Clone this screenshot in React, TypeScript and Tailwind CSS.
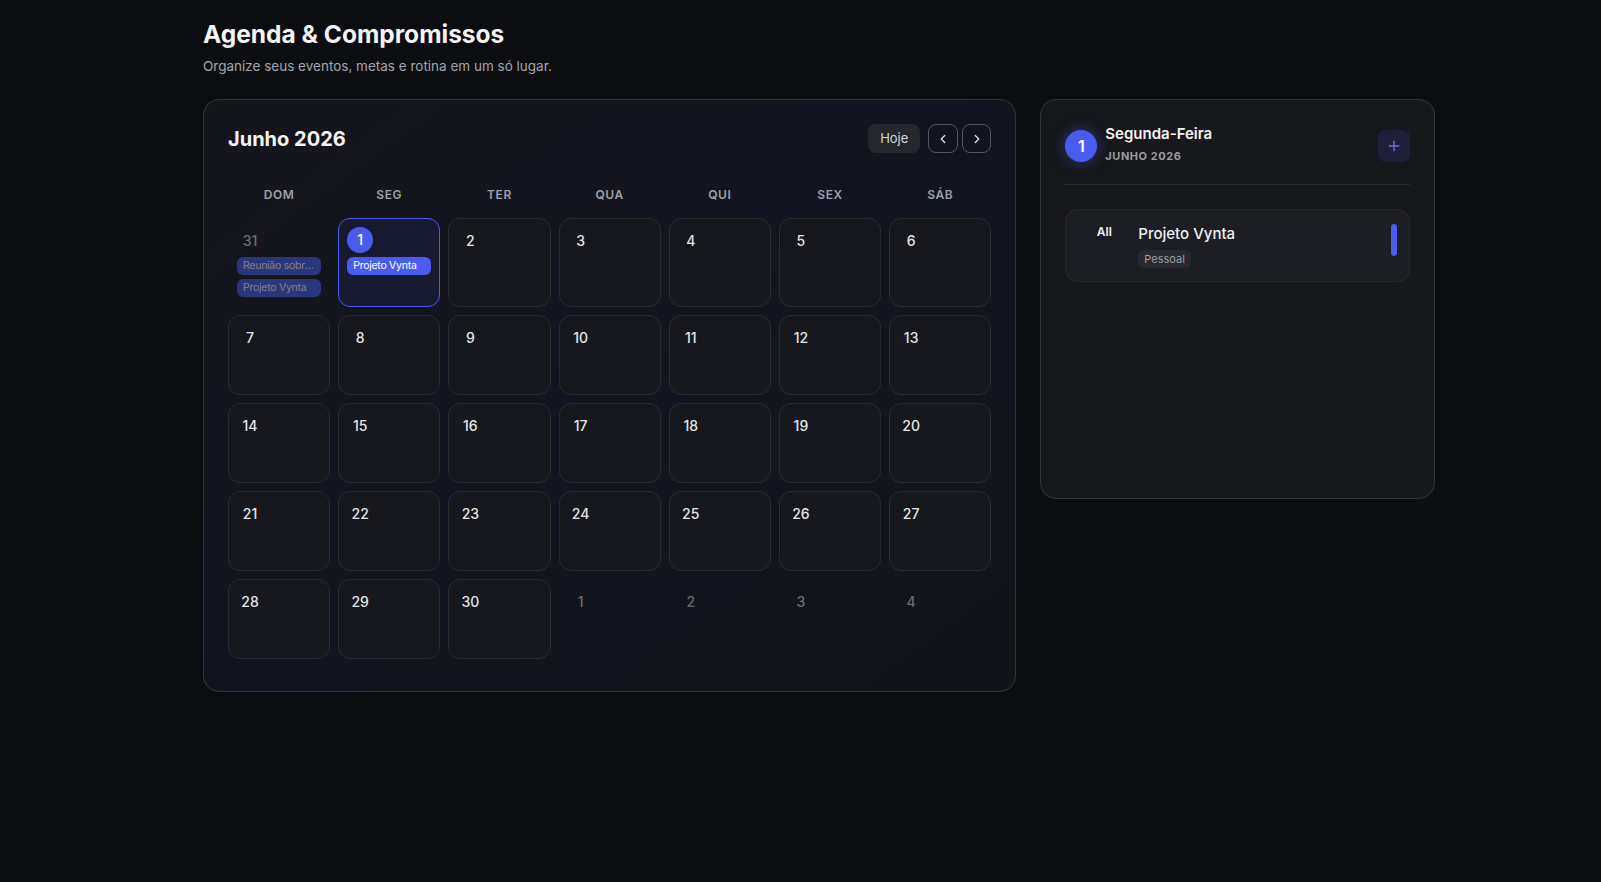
import { ChevronLeft, ChevronRight, Plus } from 'lucide-react';

type Day = { n: number; muted?: boolean; today?: boolean; events?: string[] };

const WEEKDAYS = ['DOM', 'SEG', 'TER', 'QUA', 'QUI', 'SEX', 'SÁB'];

// June 2026 starts on a Monday; pad with the tail of May and head of July
const DAYS: Day[] = [
  { n: 31, muted: true, events: ['Reunião sobre o lançamento', 'Projeto Vynta'] },
  { n: 1, today: true, events: ['Projeto Vynta'] },
  ...Array.from({ length: 29 }, (_, i) => ({ n: i + 2 })),
  { n: 1, muted: true },
  { n: 2, muted: true },
  { n: 3, muted: true },
  { n: 4, muted: true },
];

function EventPills({ events, className = 'mt-1' }: { events: string[]; className?: string }) {
  return (
    <div className={`flex flex-col gap-1 ${className}`}>
      {events.map((e, i) => (
        <div
          key={i}
          className="h-[18px] truncate rounded-md bg-[#4a5cf0] px-1.5 text-[10.5px] leading-[18px] tracking-tight text-white"
        >
          {e}
        </div>
      ))}
    </div>
  );
}

function DayCell({ d }: { d: Day }) {
  if (d.muted) {
    return (
      <div className="min-h-[80px] px-[9px] pb-[10px] pt-2 opacity-45">
        <div className="mt-0.5 flex h-[26px] w-[26px] items-center justify-center text-sm font-medium text-[#d4d5d9]">
          {d.n}
        </div>
        {d.events && <EventPills events={d.events} className="mt-[3px]" />}
      </div>
    );
  }

  return (
    <div
      className={`min-h-[80px] rounded-xl border p-2 ${
        d.today ? 'border-[#4c5be6] bg-[#171a31]' : 'border-[#2a2b31] bg-[#17181d]'
      }`}
    >
      <div
        className={`flex h-[26px] w-[26px] items-center justify-center rounded-full text-sm font-medium ${
          d.today ? 'bg-[#4a5cf0] text-white' : 'mt-px text-[#e4e5e8]'
        }`}
      >
        {d.n}
      </div>
      {d.events && <EventPills events={d.events} />}
    </div>
  );
}

export default function App() {
  return (
    <div
      className="min-h-screen bg-[#0c0d11] pl-[203px] pt-[18px] text-white"
      style={{ fontFamily: 'Inter, "Noto Sans", sans-serif' }}
    >
      <div className="w-[1232px]">
        <h1 className="text-[24.5px] font-bold leading-8 text-[#f4f4f6]">Agenda &amp; Compromissos</h1>
        <p className="mt-[6px] text-[13.5px] leading-5 text-[#a3a6ad]">
          Organize seus eventos, metas e rotina em um só lugar.
        </p>

        <div className="mt-[23px] grid grid-cols-3 items-start gap-6">
          {/* calendar */}
          <section className="col-span-2 rounded-2xl border border-[#34353b] bg-gradient-to-br from-[#15161c] via-[#121420] to-[#13141a] px-6 pb-8 pt-6">
            <div className="flex items-center justify-between">
              <h2 className="text-xl font-bold text-[#f4f4f6]">Junho 2026</h2>
              <div className="flex items-center gap-2">
                <button className="h-[29px] rounded-lg bg-[#25272d] px-3 text-[13px] text-[#d3d5da]">Hoje</button>
                <div className="flex gap-1">
                  <button className="flex h-[29px] w-[30px] items-center justify-center rounded-lg border border-[#56575e] text-[#e0e1e5]">
                    <ChevronLeft size={14} strokeWidth={2.25} />
                  </button>
                  <button className="flex h-[29px] w-[29px] items-center justify-center rounded-lg border border-[#56575e] text-[#e0e1e5]">
                    <ChevronRight size={14} strokeWidth={2.25} />
                  </button>
                </div>
              </div>
            </div>

            <div className="mb-[15px] mt-[34px] grid grid-cols-7 gap-2">
              {WEEKDAYS.map((w) => (
                <div key={w} className="text-center text-xs font-semibold leading-4 tracking-wider text-[#9ea1a8]">
                  {w}
                </div>
              ))}
            </div>

            <div className="grid grid-cols-7 gap-2">
              {DAYS.map((d, i) => (
                <DayCell key={i} d={d} />
              ))}
            </div>
          </section>

          {/* selected day */}
          <aside className="min-h-[400px] rounded-2xl border border-[#34353b] bg-[#17181c] px-6 pt-[23px]">
            <div className="flex items-start justify-between border-b border-[#2a2b30] pb-5">
              <div className="flex items-start gap-2">
                <div className="mt-[7px] flex h-8 w-8 items-center justify-center rounded-full bg-[#4a5cf0] text-base font-semibold text-white shadow-[0_0_14px_rgba(74,92,240,0.45)]">
                  1
                </div>
                <div>
                  <div className="text-[15px] font-semibold leading-[22px] text-[#f4f4f6]">Segunda-Feira</div>
                  <div className="mt-[3px] text-[11px] font-bold leading-4 tracking-wider text-[#9a9ca3]">JUNHO 2026</div>
                </div>
              </div>
              <button className="mt-[7px] flex h-8 w-8 items-center justify-center rounded-lg bg-[#1e2039] text-[#6b74dc]">
                <Plus size={16} strokeWidth={2} />
              </button>
            </div>

            <div className="mt-6 flex items-start gap-3 rounded-xl border border-[#26272d] bg-[#1d1e23] pb-3 pl-4 pr-3 pt-3.5">
              <div className="w-11 text-center text-xs font-semibold leading-4 text-[#f0f0f2]">All</div>
              <div className="flex-1">
                <div className="text-[15px] font-medium leading-5 text-[#f0f0f2]">Projeto Vynta</div>
                <span className="mt-[6px] inline-block rounded-md bg-[#272930] px-1.5 text-[11px] leading-[18px] text-[#9ca0a8]">
                  Pessoal
                </span>
              </div>
              <div className="h-8 w-1.5 rounded-full bg-[#4a5cf0]" />
            </div>
          </aside>
        </div>
      </div>
    </div>
  );
}
